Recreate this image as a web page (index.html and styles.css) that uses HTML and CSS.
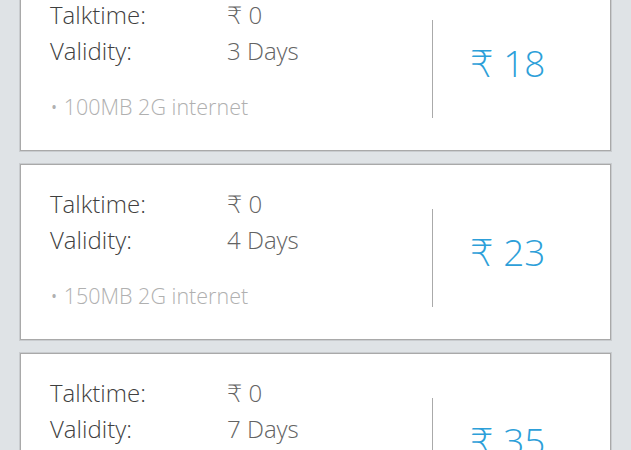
FILE: index.html
```html
<!DOCTYPE html>
<html>
<head>
<meta charset="utf-8">
<link rel="stylesheet" href="styles.css">
</head>
<body>
<div class="list">
  <div class="card">
    <div class="info">
      <div class="row"><span class="label">Talktime:</span><span class="value">₹ 0</span></div>
      <div class="row"><span class="label">Validity:</span><span class="value">3 Days</span></div>
      <div class="benefit">• 100MB 2G internet</div>
    </div>
    <div class="divider"></div>
    <div class="price">₹ 18</div>
  </div>
  <div class="card">
    <div class="info">
      <div class="row"><span class="label">Talktime:</span><span class="value">₹ 0</span></div>
      <div class="row"><span class="label">Validity:</span><span class="value">4 Days</span></div>
      <div class="benefit">• 150MB 2G internet</div>
    </div>
    <div class="divider"></div>
    <div class="price">₹ 23</div>
  </div>
  <div class="card">
    <div class="info">
      <div class="row"><span class="label">Talktime:</span><span class="value">₹ 0</span></div>
      <div class="row"><span class="label">Validity:</span><span class="value">7 Days</span></div>
      <div class="benefit">• 200MB 2G internet</div>
    </div>
    <div class="divider"></div>
    <div class="price">₹ 35</div>
  </div>
</div>
</body>
</html>
```

FILE: styles.css
```css
html, body {
  margin: 0;
  padding: 0;
}
body {
  background: #dfe3e6;
  font-family: "Open Sans", "DejaVu Sans", sans-serif;
  font-weight: 300;
  overflow: hidden;
  height: 450px;
}
.list {
  margin-top: -25px;
  padding: 0 20px;
  display: flex;
  flex-direction: column;
  gap: 13px;
}
.card {
  background: #fff;
  border: 1px solid #a9a9a9;
  box-shadow: 0 0 0 1px #c9cccf;
  height: 176px;
  flex: 0 0 176px;
  box-sizing: border-box;
  display: flex;
  align-items: flex-start;
}
.info {
  flex: 0 0 411px;
  padding-left: 29px;
  padding-top: 20px;
  box-sizing: border-box;
}
.row {
  display: flex;
  height: 36px;
  align-items: center;
  font-size: 24px;
}
.label {
  width: 177px;
  color: #3f3f3f;
}
.value {
  color: #636363;
}
.benefit {
  margin-top: 25px;
  font-size: 21.5px;
  color: #b0b0b0;
  line-height: 28px;
}
.divider {
  width: 1px;
  height: 98px;
  background: #aaa;
  margin-top: 44px;
}
.price {
  align-self: center;
  padding-left: 37px;
  font-size: 37px;
  color: #2d9fd9;
  margin-top: -2px;
}
```
